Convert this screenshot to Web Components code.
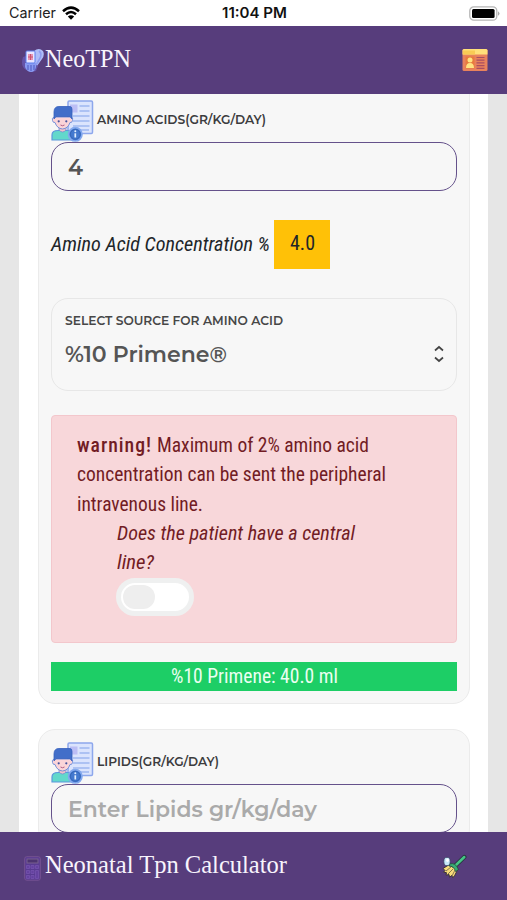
<!DOCTYPE html>
<html lang="en">
<head>
<meta charset="utf-8">
<title>NeoTPN</title>
<style>
html,body{margin:0;height:100%;overflow:hidden}
body{font-family:"Liberation Sans",sans-serif}
</style>
</head>
<body>
<tpn-app></tpn-app>
<script>
const define = (name, html, ready) => {
  const t = document.createElement('template');
  t.innerHTML = html;
  customElements.define(name, class extends HTMLElement {
    connectedCallback() {
      if (this.shadowRoot) return;
      this.attachShadow({mode: 'open'}).append(t.content.cloneNode(true));
      if (ready) ready.call(this, this.shadowRoot);
    }
  });
};

// One line of text, scaled horizontally to the width given in "w".
define('fit-text', `<style>
:host{display:inline-block;white-space:nowrap}
span{display:inline-block;transform-origin:0 50%}
</style><span><slot></slot></span>`, function (root) {
  const s = root.querySelector('span'), w = +this.getAttribute('w');
  this.style.width = w + 'px';
  s.style.transform = `scaleX(${w / s.getBoundingClientRect().width})`;
});

define('status-bar', `<style>
:host{display:grid;grid-template-columns:1fr auto 1fr;align-items:center;height:26px;background:#fff;color:#222;padding:0 7px 0 9px;font:14.5px/26px Inter,sans-serif;box-sizing:border-box}
.l{display:flex;align-items:center;gap:6px}
.time{font-weight:600;color:#111}
.bat{justify-self:end}
svg{display:block}
</style>
<div class="l"><fit-text w="47">Carrier</fit-text>
<svg width="18" height="14" viewBox="0 0 18 14" fill="none" stroke="#000" stroke-width="2.5"><path d="M1 5.2Q9-2 17 5.2M4 8.3Q9 3.8 14 8.3"/><path d="M9 13.8L5.8 10.5Q9 7.9 12.2 10.5Z" fill="#000" stroke="none"/></svg></div>
<fit-text class="time" w="65">11:04 PM</fit-text>
<svg class="bat" width="31" height="15" viewBox="0 0 31 15"><rect x=".8" y=".8" width="27" height="13.4" rx="4" fill="#fff" stroke="#b5b5b5" stroke-width="1.3"/><rect x="3" y="3" width="22.6" height="9" rx="1.5"/><path d="M29 5.2q3 2.3 0 4.6z" fill="#aaa"/></svg>`);

define('app-bar', `<style>
:host{display:flex;align-items:center;justify-content:space-between;height:68px;background:#573d7c;color:#f8f4fc;font:25px/30px "Liberation Serif",serif;box-sizing:border-box}
</style><slot></slot><slot name="action"></slot>`);

define('brand-icon', `<style>:host{display:block;width:24px;height:26px}svg{display:block}</style>
<svg width="24" height="26" viewBox="0 0 24 26"><path d="M13 3q5-4 9 0 2 4-1 8l-5 7-5-1z" fill="#aebdf8"/><path d="M2 9q-3 9 3 13 5 3 10 1l2-5-12-10z" fill="#6554a9"/><path d="M18 3q4 3 0 9l-3 5" fill="none" stroke="#8e9cf0" stroke-width="1.6"/><path d="M4 15h11v4q-1 5-5 5t-6-5z" fill="#899bf2"/><path d="M7 17v5m3-5v6m3-6v5" stroke="#5864c8" stroke-width="1.2"/><rect x="5" y="3" width="9" height="12" rx="1" fill="#e9e5ff" stroke="#5d7eed"/><path d="M7 6h5v6H7z" fill="#e594b6"/><path d="M9.5 6v6M7 9h5" stroke="#ca546f" stroke-width="1"/></svg>`);

define('id-icon', `<style>:host{display:block}svg{display:block}</style>
<svg width="26" height="24" viewBox="0 0 26 24"><rect x=".5" y="1" width="25" height="22" rx="1.5" fill="#e8825c"/><path d="M.5 6.5V2.5Q.5 1 2 1h22q1.500 0 1.500 1.500v4z" fill="#ffe07a"/><path d="M1 2.500h12v4H1z" fill="#f9cb55"/><rect x="3.500" y="8.500" width="9" height="12" fill="#e8793e"/><circle cx="8" cy="12" r="2.500" fill="#ffe382"/><path d="M4 20q0-5 4-5t4 5z" fill="#ffe382"/><path d="M14.500 9.500h8m-8 2.700h8m-8 2.700h8m-8 2.700h8m-8 2.700h8" stroke="#a94e61" stroke-width="1.200"/></svg>`);

define('calc-icon', `<style>:host{display:block}svg{display:block}</style>
<svg width="17" height="25" viewBox="0 0 17 25"><rect x=".7" y=".7" width="15.600" height="23.500" rx="2" fill="#593b91" stroke="#765391"/><rect x="3" y="3" width="11" height="4" fill="#4c3470" stroke="#79608f"/><g fill="#6542a0" stroke="#7553ad" stroke-width=".8"><path d="M2.500 9.500h3v3h-3zM7 9.500h3v3H7zM11.500 9.500h3v3h-3zM2.500 14.500h3v3h-3zM7 14.500h3v3H7zM11.500 14.500h3v8h-3zM2.500 19.500h3v3h-3zM7 19.500h3v3H7z"/></g></svg>`);

define('broom-icon', `<style>:host{display:block}svg{display:block}</style>
<svg width="26" height="25" viewBox="0 0 26 25"><path d="M13.500 11.500L22.300 3" stroke="#26363d" stroke-width="4.400" stroke-linecap="round"/><path d="M13.500 11.500L22.300 3" stroke="#45c585" stroke-width="2.500" stroke-linecap="round"/><path d="M6.500 11L1 14.500l2 2-1.500 1.700 3 .5-.5 2.500 3-.7.500 2.700 2.300-1.700 1 2.300 2-2.500 3-6z" fill="#f7db7a" stroke="#3c3338" stroke-width="1"/><path d="M4 17l5-4m-3 7l5-5m-1 7l3-6" stroke="#594b3e" stroke-width=".7"/><path d="M7.500 10q6-2 9 5.500l-3 2Q12 12 7 12z" fill="#39ae73" stroke="#25463f" stroke-width=".8"/><ellipse cx="5" cy="7.500" rx="3.200" ry="4.200" fill="#c8e9fa" stroke="#36415f" stroke-width=".8"/><ellipse cx="5.500" cy="6.200" rx="1.300" ry="1.700" fill="#fff"/></svg>`);

define('patient-icon', `<style>:host{display:block}svg{display:block}</style>
<svg width="43" height="42" viewBox="0 0 43 42"><rect x="17" y="1" width="24.500" height="32.500" rx="1.200" fill="#dbe4fd" stroke="#8da7ec" stroke-width="1.500"/><rect x="19" y="4.500" width="7.500" height="8" fill="#bcbef5"/><path d="M28.500 6h10M28.500 11h10M22 16h16.500M22 21h16.500M22 26h16.500M29 30h9" stroke="#9fb6f0" stroke-width="1.300"/><path d="M1 40v-5q0-4.500 6-4.500h9q6 0 6 4.500v5z" fill="#62d8cb" stroke="#5b98dc" stroke-width="1.200"/><path d="M8 26h7v4q-3.500 4-7 0z" fill="#f3bfc9" stroke="#748bd2" stroke-width=".8"/><path d="M3 17q-2.500 1-1.500 3.500Q2 23 4 22.500q2 6 7.500 6.500 5.500-.5 7.500-6.500 2 .5 2.500-2 1-2.500-1.500-3.500z" fill="#fbd4d8" stroke="#7691d8" stroke-width="1"/><path d="M3 19V12q0-5.500 5-5.500h11q2 0 2 3V19l-2-2.500H5z" fill="#426ec9" stroke="#365fbd" stroke-width=".8"/><circle cx="7.700" cy="21.300" r="1.100" fill="#45529d"/><circle cx="15.300" cy="21.300" r="1.100" fill="#45529d"/><path d="M9.500 25q2 1.500 4 0" fill="none" stroke="#af5d84"/><circle cx="24.300" cy="34.300" r="6.700" fill="#4379cf" stroke="#84a9ee" stroke-width="1.700"/><circle cx="24.300" cy="34.300" r="4.900" fill="none" stroke="#315faf" stroke-width=".7"/><circle cx="24.300" cy="31.200" r="1" fill="#e3f0ff"/><path d="M24.300 33.300v4.200" stroke="#e3f0ff" stroke-width="1.700"/></svg>`);

define('form-card', `<style>
:host{display:flex;flex-direction:column;box-sizing:border-box;width:432px;background:#f7f7f7;border:1px solid #ebebeb;border-radius:17px;padding:12px;flex:none}
</style><slot></slot>`);

define('number-field', `<style>
:host{display:block;font-family:Montserrat,Inter,sans-serif}
.label{display:flex;align-items:center;gap:3px;height:42px;font-weight:600;font-size:12px;color:#3c3c3e}
.label ::slotted(*){margin-top:-4px}
.box{box-sizing:border-box;height:49px;border:1.5px solid #65528b;border-radius:17px;padding:2px 0 0 16px;display:flex;align-items:center;font-weight:600;font-size:22px;color:#555}
:host([empty]) .box{color:#aaa}
</style><div class="label"><patient-icon></patient-icon><slot name="label"></slot></div><div class="box"><slot></slot></div>`);

define('concentration-row', `<style>
:host{display:flex;align-items:center;gap:4px;height:49px;margin-top:29px;font:20px/29px "Roboto Condensed",Roboto,sans-serif;color:#212529}
.b{width:56px;height:49px;background:#ffc107;display:flex;align-items:center;justify-content:center}
.b fit-text{margin-top:-3px}
</style><fit-text w="219" style="font-style:italic">Amino Acid Concentration %</fit-text><div class="b"><fit-text w="25">4.0</fit-text></div>`);

define('source-select', `<style>
:host{display:flex;justify-content:space-between;align-items:center;box-sizing:border-box;height:93px;margin-top:29px;border:1px solid #e7e7e7;border-radius:17px;padding:0 12px 0 13px;font-family:Montserrat,Inter,sans-serif;font-weight:600;color:#555}
.c{display:flex;flex-direction:column;padding-bottom:7px}
.s{font-size:12px;line-height:16px;color:#474747}.v{font-size:22px;line-height:30px;margin-top:11px}
svg{margin-top:19px}
</style><div class="c"><fit-text class="s" w="218">SELECT SOURCE FOR AMINO ACID</fit-text><fit-text class="v" w="162">%10 Primene®</fit-text></div>
<svg width="10" height="18" viewBox="0 0 10 18" fill="none" stroke="#444" stroke-width="1.700"><path d="M1 5.500L5 2l4 3.500M1 12.500L5 16l4-3.500"/></svg>`);

define('toggle-switch', `<style>
:host{display:block;box-sizing:border-box;width:78px;height:38px;border:5px solid #eff0f0;border-radius:19px;background:#fff;padding:2px}
i{display:block;width:32px;height:24px;border-radius:14px;background:#eee}
</style><i></i>`);

define('line-warning', `<style>
:host{display:flex;flex-direction:column;box-sizing:border-box;height:228px;margin-top:24px;padding:15px 25px;background:#f8d7da;border:1px solid #f3c7cc;border-radius:4px;color:#721c24;font:20px/29.300px "Roboto Condensed",Roboto,sans-serif}
.r{display:flex;gap:5px}
b{font-weight:500;letter-spacing:1px}
.q{display:flex;flex-direction:column;padding-left:40px;font-style:italic}
toggle-switch{font-style:normal;margin-top:1px;margin-left:-1px}
</style>
<div class="r"><fit-text w="75"><b>warning!</b></fit-text><fit-text w="212">Maximum of 2% amino acid</fit-text></div>
<fit-text w="309">concentration can be sent the peripheral</fit-text>
<fit-text w="126">intravenous line.</fit-text>
<div class="q"><fit-text w="238">Does the patient have a central</fit-text><fit-text w="37">line?</fit-text><toggle-switch></toggle-switch></div>`);

define('result-bar', `<style>
:host{display:flex;justify-content:center;height:29px;margin-top:19px;background:#1dce66;color:#eafff1;font:20px/29px "Roboto Condensed",Roboto,sans-serif}
</style><slot></slot>`);

define('tpn-app', `<style>
:host{display:flex;flex-direction:column;width:507px;height:900px;overflow:hidden}
main{flex:1;min-height:0;overflow:hidden;background:#e6e6e6;padding:0 19px}
.page{height:100%;background:#fff;display:flex;flex-direction:column;gap:25px;padding-left:19px;box-sizing:border-box}
.first{margin-top:-19px;padding-top:24px}
.brand{display:flex;align-items:center}
.brand fit-text{margin-top:-2px}
</style>
<status-bar></status-bar>
<app-bar style="padding:0 19px 0 21px"><div class="brand"><brand-icon style="margin-top:2px"></brand-icon><fit-text w="86">NeoTPN</fit-text></div><id-icon slot="action" style="margin-top:-1px"></id-icon></app-bar>
<main><div class="page">
<form-card class="first">
<number-field><fit-text slot="label" w="169">AMINO ACIDS(GR/KG/DAY)</fit-text><fit-text w="15">4</fit-text></number-field>
<concentration-row></concentration-row>
<source-select></source-select>
<line-warning></line-warning>
<result-bar><fit-text w="167">%10 Primene: 40.0 ml</fit-text></result-bar>
</form-card>
<form-card>
<number-field empty><fit-text slot="label" w="122">LIPIDS(GR/KG/DAY)</fit-text><fit-text w="249">Enter Lipids gr/kg/day</fit-text></number-field>
</form-card>
</div></main>
<app-bar style="padding:0 39px 0 24px"><div class="brand" style="gap:4px"><calc-icon style="margin-top:4px"></calc-icon><fit-text w="242">Neonatal Tpn Calculator</fit-text></div><broom-icon slot="action"></broom-icon></app-bar>`);
</script>
</body>
</html>
